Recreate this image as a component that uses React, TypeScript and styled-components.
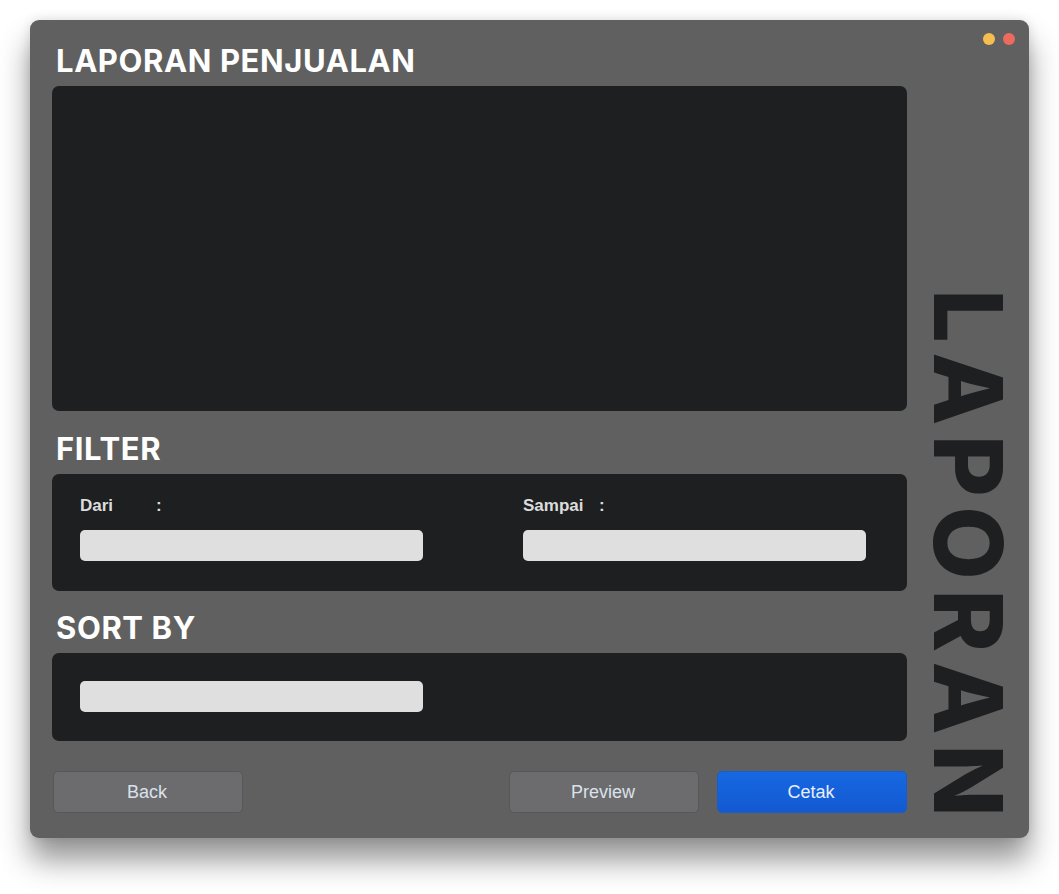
import React from "react";
import styled, { createGlobalStyle } from "styled-components";

const Global = createGlobalStyle`
  html, body { margin: 0; padding: 0; background: #ffffff; }
  body { font-family: "Liberation Sans", Arial, sans-serif; }
  * { box-sizing: border-box; }
`;

const Page = styled.div`
  padding: 20px 0 0 30px;
  width: 1059px;
  height: 894px;
`;

const Window = styled.div`
  position: relative;
  width: 999px;
  height: 818px;
  background: #606060;
  border-radius: 9px;
  box-shadow: 0 22px 30px rgba(0, 0, 0, 0.42), 0 0 12px rgba(0, 0, 0, 0.12);
  display: grid;
  grid-template-columns: 855px 1fr;
  padding-left: 22px;
`;

const Controls = styled.div`
  position: absolute;
  top: 13px;
  right: 14px;
  display: flex;
  gap: 8px;
`;

const Dot = styled.span<{ $color: string }>`
  width: 12px;
  height: 12px;
  border-radius: 50%;
  background: ${(p) => p.$color};
`;

const Main = styled.div`
  display: flex;
  flex-direction: column;
  width: 855px;
`;

const Heading = styled.div<{ $h: number }>`
  height: ${(p) => p.$h}px;
  display: flex;
  align-items: flex-end;
  padding: 0 0 10px 4px;
  font-family: Inter, "Open Sans", sans-serif;
  font-weight: 700;
  font-size: 31px;
  line-height: 1;
  letter-spacing: 0.6px;
  color: #ffffff;
`;

const Panel = styled.div<{ $h: number; $pt: number }>`
  height: ${(p) => p.$h}px;
  background: #1e1f21;
  border-radius: 7px;
  padding: ${(p) => p.$pt}px 41px 0 28px;
`;

const FieldGrid = styled.div`
  display: grid;
  grid-template-columns: 343px 343px;
  column-gap: 100px;
`;

const Field = styled.div`
  display: flex;
  flex-direction: column;
  gap: 13px;
`;

const LabelRow = styled.div`
  display: flex;
  font-family: "Liberation Sans", Arial, sans-serif;
  font-weight: 700;
  font-size: 17px;
  line-height: 22px;
  color: #dcdcdc;
`;

const LabelText = styled.span`
  width: 76px;
`;

const Input = styled.div<{ $w?: number }>`
  width: ${(p) => p.$w ?? 343}px;
  height: 31px;
  background: #dfdfdf;
  border-radius: 5px;
`;

const ButtonRow = styled.div`
  display: flex;
  align-items: center;
  gap: 18px;
  margin-top: 30px;
  padding-left: 1px;
`;

const Spacer = styled.div`
  flex: 1;
`;

const Button = styled.button<{ $primary?: boolean }>`
  width: 190px;
  height: 42px;
  border-radius: 5px;
  border: 1px solid ${(p) => (p.$primary ? "#1a5cc8" : "#565658")};
  background: ${(p) =>
    p.$primary ? "linear-gradient(#1668e2, #1359d1)" : "#6c6c6e"};
  color: ${(p) => (p.$primary ? "#e8effc" : "#dbe1ec")};
  font-family: "Liberation Sans", Arial, sans-serif;
  font-size: 18px;
  padding: 0 2px 0 0;
  cursor: pointer;
`;

const Side = styled.div`
  display: flex;
  align-items: flex-end;
  justify-content: flex-start;
  padding-bottom: 12px;
`;

const Vertical = styled.div`
  writing-mode: vertical-rl;
  font-family: Inter, "Open Sans", sans-serif;
  font-weight: 800;
  font-size: 95px;
  line-height: 1;
  letter-spacing: 9.5px;
  color: #1e1f21;
  margin-left: 14px;
`;

export default function App() {
  return (
    <>
      <Global />
      <Page>
        <Window>
          <Controls>
            <Dot $color="#f5bf4f" />
            <Dot $color="#ec6a5e" />
          </Controls>
          <Main>
            <Heading $h={66}>LAPORAN PENJUALAN</Heading>
            <Panel $h={325} $pt={0} />
            <Heading $h={63}>FILTER</Heading>
            <Panel $h={117} $pt={21}>
              <FieldGrid>
                <Field>
                  <LabelRow>
                    <LabelText>Dari</LabelText>:
                  </LabelRow>
                  <Input />
                </Field>
                <Field>
                  <LabelRow>
                    <LabelText>Sampai</LabelText>:
                  </LabelRow>
                  <Input />
                </Field>
              </FieldGrid>
            </Panel>
            <Heading $h={62}>SORT BY</Heading>
            <Panel $h={88} $pt={28}>
              <Input />
            </Panel>
            <ButtonRow>
              <Button>Back</Button>
              <Spacer />
              <Button>Preview</Button>
              <Button $primary>Cetak</Button>
            </ButtonRow>
          </Main>
          <Side>
            <Vertical>LAPORAN</Vertical>
          </Side>
        </Window>
      </Page>
    </>
  );
}
